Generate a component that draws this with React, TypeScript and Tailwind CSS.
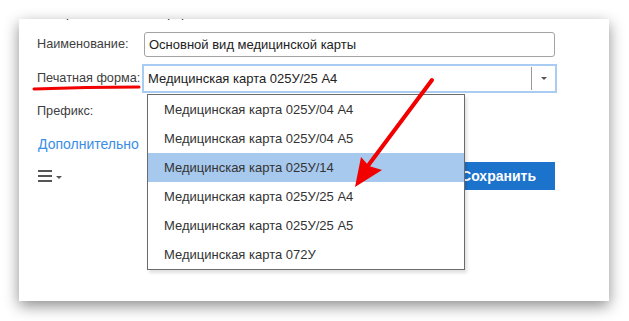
import React from "react";

const items = [
  "Медицинская карта 025У/04 А4",
  "Медицинская карта 025У/04 А5",
  "Медицинская карта 025У/14",
  "Медицинская карта 025У/25 А4",
  "Медицинская карта 025У/25 А5",
  "Медицинская карта 072У",
];

const App = () => {
  return (
    <div
      className="relative w-[629px] h-[321px] bg-white pt-[19px] pl-[19px] overflow-hidden"
      style={{ fontFamily: '"Liberation Sans", Arial, sans-serif' }}
    >
      {/* Form panel */}
      <div className="relative w-[590px] h-[282px] bg-white shadow-[0_5px_14px_rgba(0,0,0,0.45)] pl-[18px] pt-[13px] text-[12.7px] text-[#404040] overflow-hidden">
        {/* clipped title above */}
        <div className="absolute left-[18px] -top-[14px] leading-[15px] text-[13px] text-[#222] whitespace-nowrap">
          Настройки печатной формы
        </div>

        {/* Наименование */}
        <div className="flex items-center h-[25px]">
          <span className="w-[107px] shrink-0 whitespace-nowrap">Наименование:</span>
          <div className="w-[411px] h-[25px] border border-[#a3a3a3] rounded-[3px] flex items-center pl-[4px] text-[13px] text-[#222]">
            Основной вид медицинской карты
          </div>
        </div>

        {/* Печатная форма */}
        <div className="flex items-center h-[29px] mt-[7px]">
          <span className="w-[105px] shrink-0 whitespace-nowrap">Печатная форма:</span>
          <div className="w-[415px] h-[29px] border-2 border-[#a9cdf2] flex items-center pl-[4px] text-[13px] text-[#222]">
            <span className="flex-1">Медицинская карта 025У/25 А4</span>
            <span className="w-px h-[23px] bg-[#9a9a9a]" />
            <span className="w-[23px] flex justify-center">
              <span className="w-0 h-0 border-l-[3px] border-r-[3px] border-t-[3px] border-l-transparent border-r-transparent border-t-[#555]" />
            </span>
          </div>
        </div>

        {/* Префикс */}
        <div className="flex items-center h-[27px] mt-[5px]">
          <span className="w-[107px] shrink-0">Префикс:</span>
        </div>

        {/* Дополнительно */}
        <div className="flex items-center h-[20px] mt-[9px] pl-[1px] text-[14px] text-[#3a8ee6]">
          Дополнительно
        </div>

        {/* Toolbar */}
        <div className="flex items-center h-[28px] mt-[8px]">
          <div className="flex items-center gap-[4px] pl-[1px]">
            <div className="flex flex-col gap-[3px]">
              <span className="block w-[14px] h-[2px] bg-[#555]" />
              <span className="block w-[14px] h-[2px] bg-[#555]" />
              <span className="block w-[14px] h-[2px] bg-[#555]" />
            </div>
            <span className="w-0 h-0 mt-[2px] border-l-[3px] border-r-[3px] border-t-[3px] border-l-transparent border-r-transparent border-t-[#555]" />
          </div>
          <div className="ml-auto mr-[54px] h-[28px] w-[115px] bg-[#1b73cc] text-white font-bold text-[14px] flex items-center justify-end pr-[19px]">
            Сохранить
          </div>
        </div>

        {/* Dropdown list */}
        <div className="absolute left-[128px] top-[75px] w-[318px] border border-[#6b6b6b] bg-white shadow-[2px_3px_3px_rgba(0,0,0,0.12)]">
          {items.map((it, i) => (
            <div
              key={it}
              className={`h-[29px] flex items-center pl-[16px] text-[13px] text-[#333] ${
                i === 2 ? "bg-[#a8c9ee]" : ""
              }`}
            >
              {it}
            </div>
          ))}
        </div>
      </div>

      {/* Annotations */}
      <svg
        className="absolute inset-0 pointer-events-none"
        width="629"
        height="321"
        viewBox="0 0 629 321"
      >
        <path
          d="M34 89 Q 86 87 139 87"
          stroke="#f20000"
          strokeWidth="3"
          strokeLinecap="round"
          fill="none"
        />
        <path
          d="M432 80 L 367 167"
          stroke="#f20000"
          strokeWidth="4"
          strokeLinecap="round"
          fill="none"
        />
        <polygon points="355,187 361,157 369,166 382,170" fill="#f20000" />
      </svg>
    </div>
  );
};

export default App;
